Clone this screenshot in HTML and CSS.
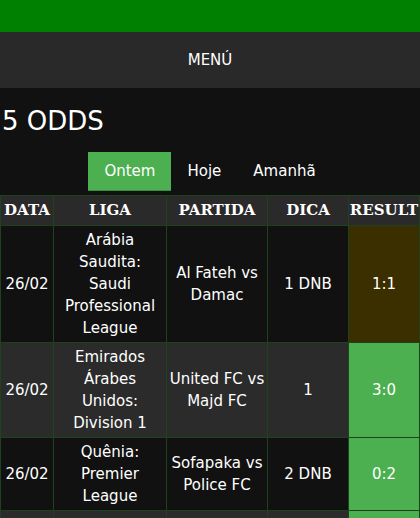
FILE: index.html
```html
<!DOCTYPE html>
<html lang="pt">
<head>
  <meta charset="UTF-8">
  <meta name="viewport" content="width=device-width, initial-scale=1.0">
  <link rel="stylesheet" href="styles.css">
  <title>5 ODDS</title>
</head>
<body>
  <div class="topbar"></div>
  <div class="menu">MENÚ</div>

  <h1 class="title">5 ODDS</h1>

  <div class="tabs">
    <a class="tab active" href="#">Ontem</a>
    <a class="tab" href="#">Hoje</a>
    <a class="tab" href="#">Amanhã</a>
  </div>

  <table class="odds">
    <colgroup>
      <col class="colData">
      <col class="colLiga">
      <col class="colPartida">
      <col class="colDica">
      <col class="colResult">
    </colgroup>
    <thead>
      <tr>
        <th>DATA</th>
        <th>LIGA</th>
        <th>PARTIDA</th>
        <th>DICA</th>
        <th>RESULT</th>
      </tr>
    </thead>
    <tbody>
      <tr>
        <td>26/02</td>
        <td class="liga">Arábia Saudita: Saudi Professional League</td>
        <td>Al Fateh vs Damac</td>
        <td>1 DNB</td>
        <td class="draw">1:1</td>
      </tr>
      <tr class="alt">
        <td>26/02</td>
        <td class="liga">Emirados Árabes Unidos: Division 1</td>
        <td>United FC vs Majd FC</td>
        <td>1</td>
        <td class="win">3:0</td>
      </tr>
      <tr>
        <td>26/02</td>
        <td class="liga">Quênia: Premier League</td>
        <td>Sofapaka vs Police FC</td>
        <td>2 DNB</td>
        <td class="win">0:2</td>
      </tr>
      <tr class="alt">
        <td>26/02</td>
        <td class="liga">Inglaterra: Premier League</td>
        <td>Arsenal vs Chelsea</td>
        <td>1</td>
        <td class="win">2:0</td>
      </tr>
    </tbody>
  </table>
</body>
</html>
```

FILE: styles.css
```css
body {
  margin: 0;
  background: #111111;
  color: #ffffff;
  font-family: "DejaVu Sans", Verdana, sans-serif;
  font-size: 15px;
}

.topbar {
  height: 32px;
  background: #008000;
}

.menu {
  height: 56px;
  background: #292929;
  display: flex;
  align-items: center;
  justify-content: center;
}

.title {
  margin: 18px 0 0 2px;
  font-size: 26px;
  line-height: 30px;
  font-weight: normal;
}

.tabs {
  display: flex;
  justify-content: center;
  margin: 16px 0 4px;
}
.tab {
  padding: 8px 16px;
  line-height: 23px;
  color: #ffffff;
  text-decoration: none;
}
.tab.active {
  background: #4caf50;
  box-shadow: inset 0 -1px 0 #3e8e41;
}

.odds {
  width: 419px;
  table-layout: fixed;
  border-collapse: collapse;
}
.colData { width: 53px; }
.colLiga { width: 113px; }
.colPartida { width: 101px; }
.colDica { width: 81px; }
.colResult { width: 71px; }

.odds th,
.odds td {
  border: 1px solid #1d421d;
  padding: 3px 0;
  line-height: 22px;
  text-align: center;
}
.odds td.liga {
  padding: 3px 3px;
}
.odds th {
  padding: 3px 0 4px;
  background: #2a2a2a;
  font-family: "DejaVu Serif", Georgia, serif;
  font-size: 15px;
  font-weight: bold;
}
.odds tr.alt td {
  background: #2b2b2b;
}
.odds td.draw {
  background: #3b2f00;
}
.odds td.win,
.odds tr.alt td.win {
  background: #4caf50;
}
```
